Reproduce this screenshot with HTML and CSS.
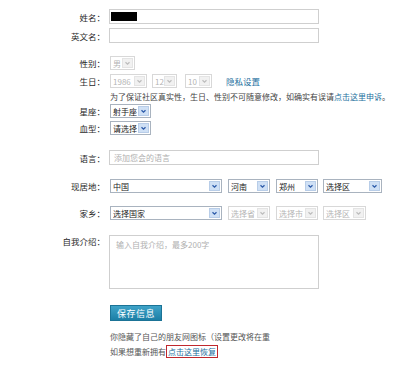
FILE: index.html
```html
<!DOCTYPE html>
<html lang="zh-CN">
<head>
  <meta charset="UTF-8">
  <title>个人资料</title>
  <link rel="stylesheet" href="styles.css">
</head>
<body>
  <div class="profile">
    <div class="row r-name">
      <span class="lbl">姓名：</span>
      <div class="input w-full"><span class="redact"></span></div>
    </div>
    <div class="row r-en">
      <span class="lbl">英文名：</span>
      <div class="input w-full"></div>
    </div>

    <div class="row r-sex">
      <span class="lbl">性别：</span>
      <div class="sel off w-sex"><span>男</span><i class="arr"><svg viewBox="0 0 10 10"><polyline points="2.5,4 5,6.5 7.5,4"/></svg></i></div>
    </div>
    <div class="row r-birth">
      <span class="lbl">生日：</span>
      <div class="inline">
        <div class="sel off w-year"><span>1986</span><i class="arr"><svg viewBox="0 0 10 10"><polyline points="2.5,4 5,6.5 7.5,4"/></svg></i></div>
        <div class="sel off w-month"><span>12</span><i class="arr"><svg viewBox="0 0 10 10"><polyline points="2.5,4 5,6.5 7.5,4"/></svg></i></div>
        <div class="sel off w-day"><span>10</span><i class="arr"><svg viewBox="0 0 10 10"><polyline points="2.5,4 5,6.5 7.5,4"/></svg></i></div>
        <a class="link privacy">隐私设置</a>
      </div>
    </div>
    <div class="row r-note">
      <span class="lbl"></span>
      <p class="note">为了保证社区真实性，生日、性别不可随意修改，如确实有误请<a class="link">点击这里申诉</a>。</p>
    </div>
    <div class="row r-star">
      <span class="lbl">星座：</span>
      <div class="sel w-star"><span>射手座</span><i class="arr"><svg viewBox="0 0 10 10"><polyline points="2.5,4 5,6.5 7.5,4"/></svg></i></div>
    </div>
    <div class="row r-blood">
      <span class="lbl">血型：</span>
      <div class="sel w-star"><span>请选择</span><i class="arr"><svg viewBox="0 0 10 10"><polyline points="2.5,4 5,6.5 7.5,4"/></svg></i></div>
    </div>

    <div class="row r-lang">
      <span class="lbl">语言：</span>
      <div class="input w-full ph">添加您会的语言</div>
    </div>

    <div class="row r-live">
      <span class="lbl">现居地：</span>
      <div class="inline">
        <div class="sel w-country"><span>中国</span><i class="arr"><svg viewBox="0 0 10 10"><polyline points="2.5,4 5,6.5 7.5,4"/></svg></i></div>
        <div class="sel w-prov"><span>河南</span><i class="arr"><svg viewBox="0 0 10 10"><polyline points="2.5,4 5,6.5 7.5,4"/></svg></i></div>
        <div class="sel w-city"><span>郑州</span><i class="arr"><svg viewBox="0 0 10 10"><polyline points="2.5,4 5,6.5 7.5,4"/></svg></i></div>
        <div class="sel w-area"><span>选择区</span><i class="arr"><svg viewBox="0 0 10 10"><polyline points="2.5,4 5,6.5 7.5,4"/></svg></i></div>
      </div>
    </div>
    <div class="row r-home">
      <span class="lbl">家乡：</span>
      <div class="inline">
        <div class="sel w-country"><span>选择国家</span><i class="arr"><svg viewBox="0 0 10 10"><polyline points="2.5,4 5,6.5 7.5,4"/></svg></i></div>
        <div class="sel off w-prov"><span>选择省</span><i class="arr"><svg viewBox="0 0 10 10"><polyline points="2.5,4 5,6.5 7.5,4"/></svg></i></div>
        <div class="sel off w-city"><span>选择市</span><i class="arr"><svg viewBox="0 0 10 10"><polyline points="2.5,4 5,6.5 7.5,4"/></svg></i></div>
        <div class="sel off w-area2"><span>选择区</span><i class="arr"><svg viewBox="0 0 10 10"><polyline points="2.5,4 5,6.5 7.5,4"/></svg></i></div>
      </div>
    </div>

    <div class="row r-intro">
      <span class="lbl">自我介绍：</span>
      <div class="textarea w-full ph">输入自我介绍，最多200字</div>
    </div>

    <div class="row r-btn">
      <span class="lbl"></span>
      <button class="save">保存信息</button>
    </div>

    <div class="row r-tip">
      <span class="lbl"></span>
      <p class="tip">你隐藏了自己的朋友网图标（设置更改将在重<br>如果想重新拥有<a class="link boxed">点击这里恢复</a></p>
    </div>
  </div>
</body>
</html>
```

FILE: styles.css
```css
body {
  margin: 0;
  background: #fff;
  color: #444;
  font-family: "Noto Sans CJK SC", "Noto Sans", sans-serif;
  font-size: 8px;
}

.profile {
  padding-top: 9px;
}

.row {
  display: grid;
  grid-template-columns: 105px 1fr;
  column-gap: 4px;
  align-items: center;
}

.lbl {
  text-align: right;
  font-size: 8.5px;
  color: #2a2a2a;
  white-space: nowrap;
}

.inline {
  display: flex;
  align-items: center;
}

/* text fields */
.input {
  box-sizing: border-box;
  height: 15px;
  border: 1px solid #cfcfcf;
  display: flex;
  align-items: center;
  padding-left: 4px;
}

.w-full {
  width: 210px;
}

.ph {
  color: #b0b0b0;
}

.redact {
  display: block;
  width: 26px;
  height: 9px;
  margin-left: -3px;
  background: #000;
}

.textarea {
  box-sizing: border-box;
  height: 54px;
  border: 1px solid #cfcfcf;
  padding: 3px 6px;
  line-height: 12px;
}

/* select boxes */
.sel {
  box-sizing: border-box;
  height: 14px;
  margin-left: 1px;
  border: 1px solid #a9b3bf;
  display: flex;
  align-items: center;
  justify-content: space-between;
  padding: 0 1px 0 2px;
  color: #222;
  background: #fff;
}

.sel span {
  white-space: nowrap;
  overflow: hidden;
}

.sel .arr {
  flex: 0 0 11px;
  width: 11px;
  height: 10px;
  background: #cfe0f5;
  border: 1px solid #b8cde8;
  box-sizing: border-box;
  display: flex;
}

.sel svg {
  width: 100%;
  height: 100%;
  fill: none;
  stroke: #2c5aa8;
  stroke-width: 1.6;
}

.sel.off {
  border-color: #d8d8d8;
  color: #b5b5b5;
}

.sel.off .arr {
  background: #f1f1f1;
  border-color: #e4e4e4;
}

.sel.off svg {
  stroke: #bdbdbd;
}

.w-sex { width: 25px; }
.w-year { width: 37px; }
.w-month { width: 25px; margin-left: 5px; }
.w-day { width: 27px; margin-left: 8px; }
.w-star { width: 41px; }
.w-country { width: 112px; }
.w-prov { width: 42px; margin-left: 6px; }
.w-city { width: 42px; margin-left: 6px; }
.w-area { width: 59px; margin-left: 5px; }
.w-area2 { width: 43px; margin-left: 5px; }

.link {
  color: #23709e;
}

.privacy {
  margin-left: 14px;
  font-size: 8.5px;
}

.note {
  margin: 0;
  margin-left: 1px;
  line-height: 12px;
  white-space: nowrap;
}

/* vertical rhythm */
.r-en { margin-top: 4px; }
.r-sex { margin-top: 13px; }
.r-birth { margin-top: 4px; }
.r-note { margin-top: 3px; }
.r-star { margin-top: 1px; }
.r-blood { margin-top: 3px; }
.r-lang { margin-top: 15px; }
.r-live { margin-top: 14px; }
.r-home { margin-top: 13px; }
.r-intro { margin-top: 15px; align-items: start; }
.r-intro .lbl { line-height: 12px; }
.r-btn { margin-top: 16px; }
.r-tip { margin-top: 8px; }

.save {
  justify-self: start;
  margin-left: 1px;
  width: 52px;
  height: 16px;
  padding: 0;
  border: 1px solid #1b7396;
  background: linear-gradient(#3fa3c8, #1c7fa6);
  color: #fff;
  font-family: inherit;
  font-size: 9px;
  letter-spacing: 0.5px;
}

.tip {
  margin: 0;
  margin-left: 1px;
  line-height: 15px;
  white-space: nowrap;
  color: #555;
}

.boxed {
  border: 1.5px solid #c0282d;
  padding: 0 1px;
  margin-left: 0;
}
```
